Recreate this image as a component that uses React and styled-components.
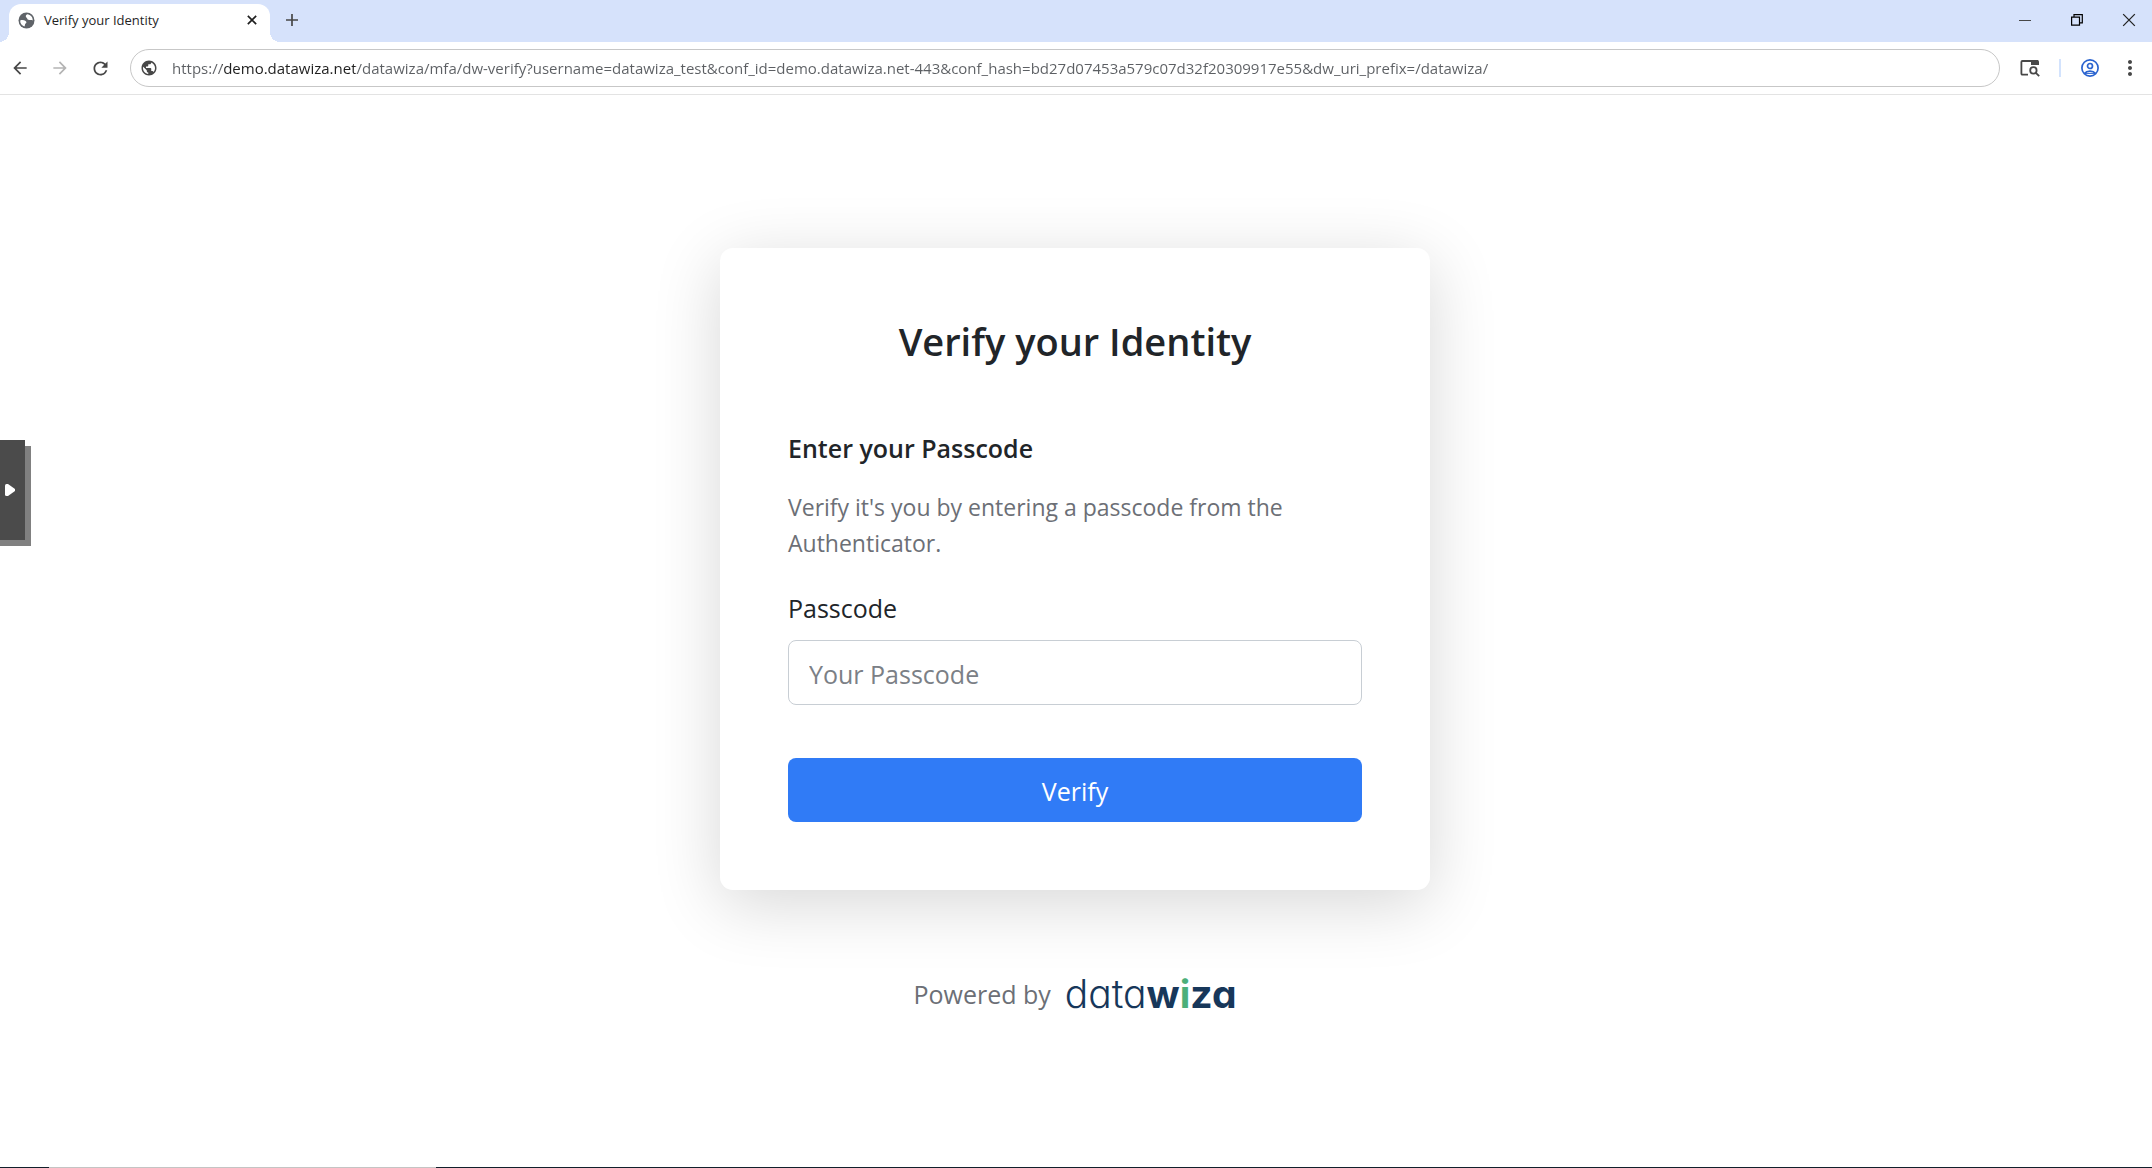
import React, { useState } from 'react';

import styled, { createGlobalStyle } from 'styled-components';
import { MdArrowBack, MdArrowForward, MdMoreVert, MdPublic, MdRefresh } from 'react-icons/md';

const GlobalStyle = createGlobalStyle`
    * {
        box-sizing: border-box;
    }

    body {
        margin: 0;
        background: #fff;
        color: #212529;
        font-family: "Open Sans", "Noto Sans", sans-serif;
    }

    button, input {
        font-family: inherit;
    }
`;

const Window = styled.div`
    display: flex;
    flex-direction: column;
    min-height: 100vh;
`;

const TitleBar = styled.div`
    display: flex;
    align-items: flex-start;
    height: 42px;
    padding-left: 9px;
    background: #d6e2fb;
`;

const Tab = styled.div`
    position: relative;
    display: flex;
    align-items: center;
    gap: 9px;
    width: 261px;
    height: 38px;
    margin-top: 4px;
    padding: 0 9px 6px;
    border-radius: 12px 12px 0 0;
    background: #fff;
    color: #5f6368;

    /* the feet that curve out into the toolbar */
    &::before, &::after {
        content: '';
        position: absolute;
        bottom: 0;
        width: 10px;
        height: 10px;
    }

    &::before {
        right: 100%;
        background: radial-gradient(circle at 0 0, transparent 10px, #fff 10px);
    }

    &::after {
        left: 100%;
        background: radial-gradient(circle at 100% 0, transparent 10px, #fff 10px);
    }
`;

const TabTitle = styled.span`
    flex: 1;
    color: #1f1f1f;
    font-size: 13px;
    white-space: nowrap;
`;

const IconButton = styled.button`
    display: flex;
    align-items: center;
    justify-content: center;
    flex: none;
    width: ${props => props.$width || 32}px;
    height: ${props => props.$height || 32}px;
    padding: 0;
    border: none;
    background: none;
    color: ${props => props.$color || '#474747'};

    &:disabled {
        color: #b4b4b4;
    }
`;

const WindowControls = styled.div`
    display: flex;
    gap: 6px;
    margin-left: auto;
`;

const Toolbar = styled.div`
    display: flex;
    align-items: center;
    gap: 8px;
    height: 53px;
    padding: 0 6px 0 4px;
    border-bottom: 1px solid #e3e3e3;
    background: #fff;
`;

const Omnibox = styled.label`
    display: flex;
    align-items: center;
    flex: 1;
    gap: 14px;
    height: 38px;
    margin: 0 6px;
    padding: 0 9px;
    border: 1px solid #c7c7c7;
    border-radius: 19px;
    color: #474747;
`;

// the host is darker than the rest of the address
const Address = styled.input`
    flex: 1;
    min-width: 0;
    padding: 0;
    border: none;
    outline: none;
    background: linear-gradient(90deg, #5c5f63 50px, #1f1f1f 50px, #1f1f1f 183px, #5c5f63 183px);
    background-clip: text;
    color: transparent;
    font-size: 15px;
    line-height: 24px;
`;

const Divider = styled.div`
    width: 2px;
    height: 18px;
    margin: 0 5px;
    background: #d3e3fd;
`;

const Page = styled.main`
    display: flex;
    flex-direction: column;
    align-items: center;
    flex: 1;
    padding: 153px 26px 24px 24px;
`;

const Card = styled.form`
    width: 100%;
    max-width: 710px;
    padding: 68px;
    border-radius: 13px;
    background: #fff;
    box-shadow: 0 14px 68px rgba(0, 0, 0, 0.16);
`;

const Title = styled.h1`
    margin: 0 0 64px;
    font-size: 38px;
    font-weight: 600;
    line-height: 50px;
    text-align: center;
`;

const Subtitle = styled.h2`
    margin: 0 0 23px;
    font-size: 25px;
    font-weight: 600;
    line-height: 36px;
`;

const Text = styled.p`
    margin: 0 0 27px;
    color: #6c6f76;
    font-size: 23px;
    line-height: 36px;
`;

const Label = styled.label`
    display: block;
    margin-bottom: 12px;
    font-size: 25px;
    line-height: 40px;
`;

const PasscodeInput = styled.input`
    display: block;
    width: 100%;
    height: 65px;
    margin-bottom: 53px;
    padding: 3px 20px 0;
    border: 1px solid #c8ced4;
    border-radius: 8px;
    outline: none;
    color: #212529;
    font-size: 25px;

    &::placeholder {
        color: #7b8086;
        opacity: 1;
    }
`;

const SubmitButton = styled.button`
    display: block;
    width: 100%;
    height: 64px;
    padding: 2px 0 0;
    border: none;
    border-radius: 8px;
    background: #307bf6;
    color: #fff;
    font-size: 25px;
`;

const Footer = styled.footer`
    display: flex;
    align-items: center;
    gap: 14px;
    margin-top: 80px;
    color: #6c6f76;
    font-size: 25px;
    line-height: 48px;
`;

const Logo = styled.span`
    color: #17375a;
    font-family: Inter, "Open Sans", sans-serif;
    font-size: 39px;
    font-weight: 300;
    font-feature-settings: "cv11";

    b {
        font-weight: 700;
    }

    i {
        color: #4caf7a;
        font-style: normal;
    }
`;

const SideHandle = styled.button`
    position: fixed;
    top: 440px;
    left: 0;
    display: flex;
    align-items: center;
    width: 25px;
    height: 100px;
    padding: 0 0 0 5px;
    border: none;
    background: #4b4b4b;
    box-shadow: 6px 6px 0 #808080, 0 6px 0 #808080;
`;

const BottomEdge = styled.div`
    height: 1px;
    background: linear-gradient(90deg, #12202b 49px, #c4c4c4 49px, #c4c4c4 436px, #12202b 436px);
`;

const url = 'https://demo.datawiza.net/datawiza/mfa/dw-verify?username=datawiza_test&conf_id=demo.datawiza.net-443&conf_hash=bd27d07453a579c07d32f20309917e55&dw_uri_prefix=/datawiza/';

const SiteIcon = () => (
    <svg width='17' height='17' viewBox='0 0 17 17' fill='none'>
        <circle cx='8.5' cy='8.5' r='8' fill='currentColor' />
        <path d='M9.2 2.3C7.6 3 7.4 4.6 8.4 5.4C9.6 6.2 9 7.2 10.4 7.8C11.8 8.4 13.4 7.6 14.8 8.4C14.8 5.2 12.6 2.6 9.2 2.3Z' fill='#fff' />
        <path d='M2.2 8.4C4.2 7.6 6.2 8 7.6 9C8.8 9.8 8.6 10.8 7.6 11.4C6.6 12 7.4 13.2 6.4 14.4C3.8 13.6 2 11.2 2.2 8.4Z' fill='#fff' />
    </svg>
);

const CrossIcon = ({ size, width }) => (
    <svg width={size} height={size} viewBox='0 0 12 12' stroke='currentColor' strokeWidth={width}>
        <path d='M1 1L11 11M11 1L1 11' />
    </svg>
);

const PlusIcon = () => (
    <svg width='12' height='12' viewBox='0 0 12 12' stroke='currentColor' strokeWidth='1.7'>
        <path d='M6 0V12M0 6H12' />
    </svg>
);

const MinimizeIcon = () => (
    <svg width='12' height='12' viewBox='0 0 12 12' stroke='currentColor'>
        <path d='M0 6.5H12' />
    </svg>
);

const RestoreIcon = () => (
    <svg width='12' height='12' viewBox='0 0 12 12' fill='none' stroke='currentColor' strokeWidth='1.2'>
        <path d='M0.6 3.1H8.5V11.2H0.6ZM3 3V0.6H11.3V8.8H8.8' />
    </svg>
);

const TabSearchIcon = () => (
    <svg width='20' height='18' viewBox='0 0 20 18' fill='none' stroke='currentColor' strokeWidth='1.8'>
        <path d='M8 15.6H2.4Q1.4 15.6 1.4 14.6V3Q1.4 2 2.4 2H18' />
        <path d='M11 1.1H17.4Q19 1.1 19 2.7V6H11Z' fill='currentColor' stroke='none' />
        <circle cx='13.4' cy='11.4' r='3.2' />
        <path d='M15.8 13.8L19.2 17.2' />
    </svg>
);

const ProfileIcon = () => (
    <svg width='18' height='18' viewBox='0 0 18 18' fill='none' stroke='currentColor' strokeWidth='1.7'>
        <circle cx='9' cy='9' r='8.1' />
        <circle cx='9' cy='7' r='2.5' />
        <path d='M3.4 14.6C5 12.6 7 12.2 9 12.2S13 12.6 14.6 14.6' />
        <path d='M3.6 14.4H14.4' strokeWidth='1' />
    </svg>
);

const ArrowIcon = () => (
    <svg width='11' height='14' viewBox='0 0 11 14' fill='#fff'>
        <path d='M0 2.5Q0 1 1.5 1H3L10 6V8L3 13H1.5Q0 13 0 11.5Z' />
    </svg>
);

export default () => {
    const [address, setAddress] = useState(url);
    const [passcode, setPasscode] = useState('');

    return(
        <Window>
            <GlobalStyle />
            <TitleBar>
                <Tab>
                    <SiteIcon />
                    <TabTitle>Verify your Identity</TabTitle>
                    <IconButton $width={18} $height={18} $color='#1f1f1f' aria-label='Close tab'>
                        <CrossIcon size={10} width={2} />
                    </IconButton>
                </Tab>
                <IconButton $width={44} $height={39} aria-label='New tab'><PlusIcon /></IconButton>
                <WindowControls>
                    <IconButton $width={46} $height={39} aria-label='Minimize'><MinimizeIcon /></IconButton>
                    <IconButton $width={46} $height={39} $color='#000' aria-label='Restore'><RestoreIcon /></IconButton>
                    <IconButton $width={46} $height={39} $color='#222' aria-label='Close'><CrossIcon size={14} width={1.1} /></IconButton>
                </WindowControls>
            </TitleBar>
            <Toolbar>
                <IconButton aria-label='Back'><MdArrowBack size={20} /></IconButton>
                <IconButton aria-label='Forward' disabled><MdArrowForward size={20} /></IconButton>
                <IconButton aria-label='Reload'><MdRefresh size={21} /></IconButton>
                <Omnibox>
                    <MdPublic size={18} />
                    <Address aria-label='Address' value={address} onChange={e => setAddress(e.target.value)} spellCheck={false} />
                </Omnibox>
                <IconButton aria-label='Search tabs'><TabSearchIcon /></IconButton>
                <Divider />
                <IconButton $color='#2a63cf' aria-label='Profile'><ProfileIcon /></IconButton>
                <IconButton aria-label='Menu'><MdMoreVert size={24} /></IconButton>
            </Toolbar>
            <Page>
                <Card onSubmit={e => e.preventDefault()}>
                    <Title>Verify your Identity</Title>
                    <Subtitle>Enter your Passcode</Subtitle>
                    <Text>Verify it's you by entering a passcode from the Authenticator.</Text>
                    <Label htmlFor='passcode'>Passcode</Label>
                    <PasscodeInput
                        id='passcode'
                        placeholder='Your Passcode'
                        value={passcode}
                        onChange={e => setPasscode(e.target.value)}
                    />
                    <SubmitButton type='submit'>Verify</SubmitButton>
                </Card>
                <Footer>
                    Powered by
                    <Logo>data<b>w<i>i</i>za</b></Logo>
                </Footer>
            </Page>
            <BottomEdge />
            <SideHandle aria-label='Open side panel'><ArrowIcon /></SideHandle>
        </Window>
    )
}
